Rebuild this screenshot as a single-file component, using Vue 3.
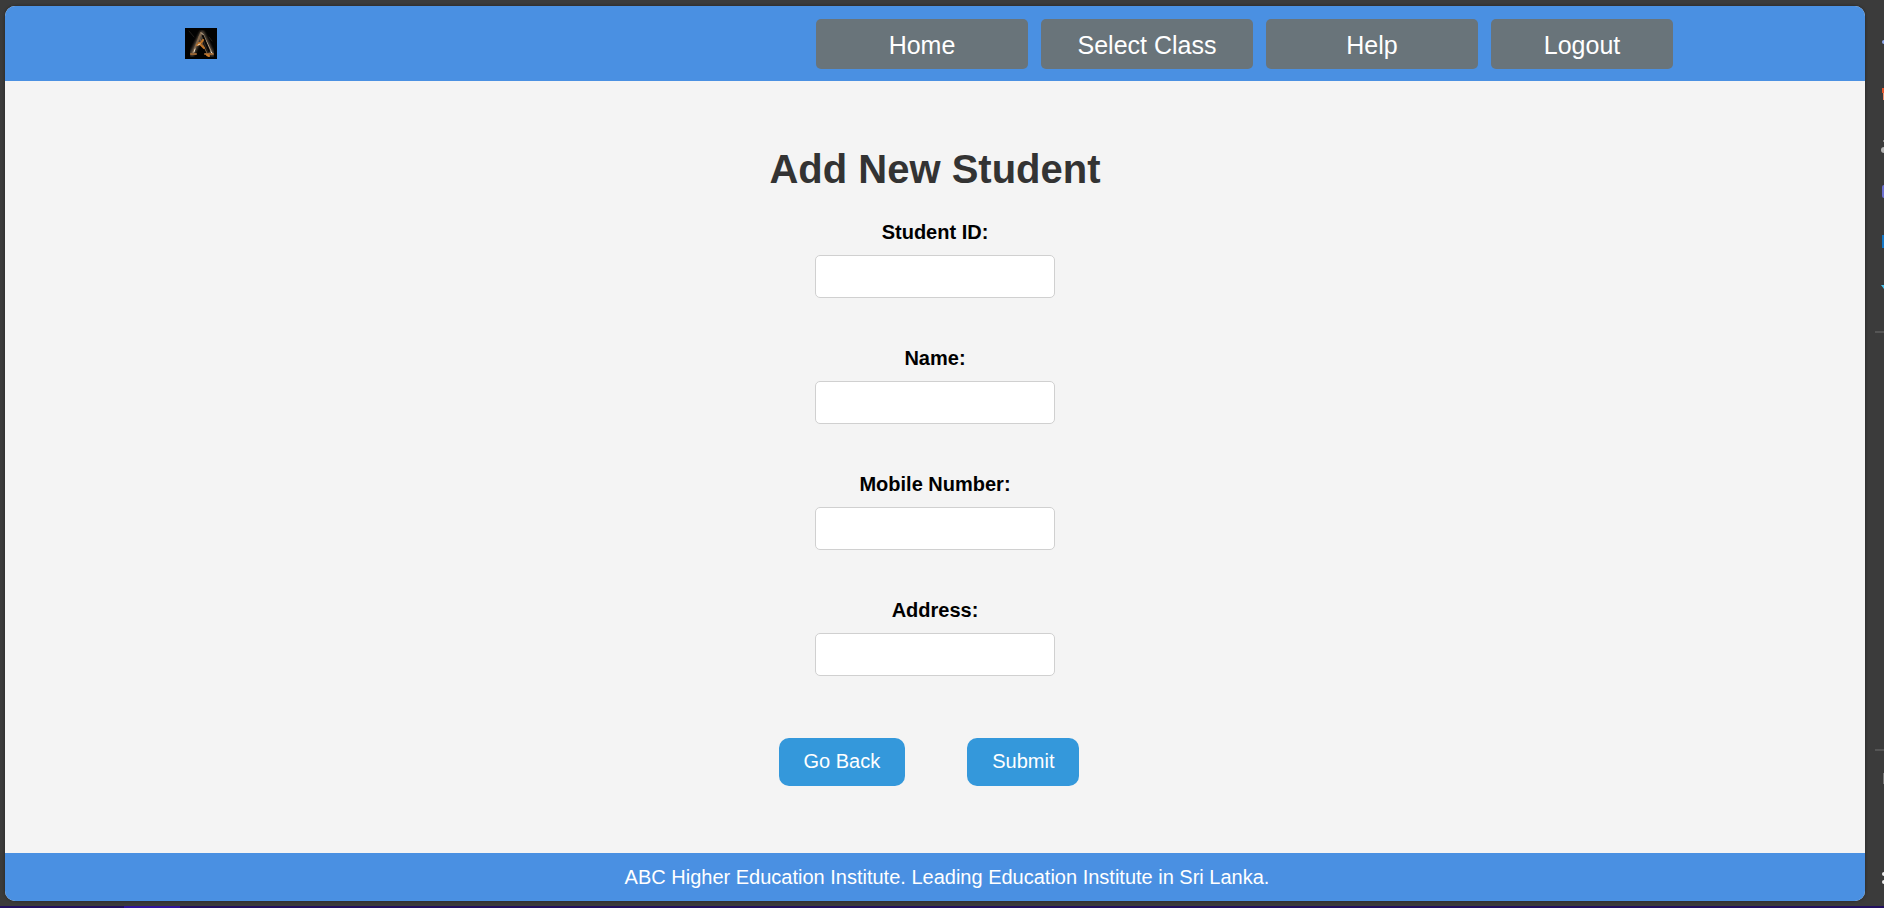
<script setup>
import { reactive } from 'vue'

const links = ['Home', 'Select Class', 'Help', 'Logout']
const fields = [
  { id: 'student-id', label: 'Student ID:' },
  { id: 'name', label: 'Name:' },
  { id: 'mobile', label: 'Mobile Number:' },
  { id: 'address', label: 'Address:' },
]
const student = reactive({ 'student-id': '', name: '', mobile: '', address: '' })
</script>

<template>
  <div class="shell">
    <div class="workspace">
      <div class="frame">
        <header class="header">
          <svg class="logo" viewBox="0 0 32 31" role="img" aria-label="Institute logo">
            <defs>
              <filter id="glow"><feGaussianBlur stdDeviation="1" /></filter>
            </defs>
            <rect width="32" height="31" fill="#020202" />
            <g fill="none" stroke-linejoin="round" stroke-linecap="round">
              <path d="M7 26L17 5L27 26" stroke="#54483c" stroke-width="5" filter="url(#glow)" />
              <path d="M6 26h5M20 26h8" stroke="#9a6330" stroke-width="2" />
              <path d="M8 25L16 5" stroke="#80664c" stroke-width="2" />
              <path d="M16 5l2 1L27 25" stroke="#b09a80" stroke-width="1" />
              <path d="M14 9l8 16" stroke="#80664c" stroke-width="1" />
              <path d="M18 8l6 15" stroke="#070504" stroke-width="2" />
              <path d="M12 17q4 -1 6 -5M14 15l5 5" stroke="#c07428" stroke-width="2" />
              <path d="M9 24l1 -3M13 17l2 -1M26 24l1 1" stroke="#eadcc6" stroke-width="1" />
              <path d="M22 27l2 1" stroke="#c97a2a" stroke-width="2" />
              <path d="M4 3l5 6M24 9l3 4" stroke="#211e1a" stroke-width="1" />
            </g>
          </svg>
          <nav class="nav">
            <a v-for="link in links" :key="link" href="#">{{ link }}</a>
          </nav>
        </header>

        <main class="content">
          <h1>Add New Student</h1>
          <form @submit.prevent>
            <div v-for="field in fields" :key="field.id" class="field">
              <label :for="field.id">{{ field.label }}</label>
              <input :id="field.id" v-model="student[field.id]" type="text" />
            </div>
            <div class="actions">
              <button type="button">Go Back</button>
              <button type="submit">Submit</button>
            </div>
          </form>
        </main>

        <footer class="footer">ABC Higher Education Institute. Leading Education Institute in Sri Lanka.</footer>
      </div>

      <aside class="rail">
        <svg width="19" height="906" viewBox="0 0 19 906" aria-hidden="true">
          <circle cx="19" cy="42" r="2" fill="#8fa9ec" />
          <path d="M17 88h2v5h-2z" fill="#e4572e" />
          <path d="M18 93h1v7h-1z" fill="#f0906e" />
          <circle cx="19" cy="141" r="1" fill="#a0a0a0" />
          <circle cx="19" cy="150" r="3" fill="#b5b5b5" />
          <rect x="17" y="185" width="6" height="13" rx="2" fill="#6b6fd0" />
          <rect x="17" y="235" width="2" height="13" fill="#1478c8" />
          <path d="M16 285h3v4z" fill="#46c2ee" />
          <path d="M10 332h9M10 750h9" stroke="#707070" />
          <rect x="18" y="773" width="1" height="11" fill="#777" />
          <circle cx="19" cy="874" r="2" fill="#eee" />
          <circle cx="19" cy="882" r="2" fill="#eee" />
        </svg>
      </aside>
    </div>
    <div class="strip"><span></span></div>
  </div>
</template>

<style>
html,
body {
  margin: 0;
  background: #3b3b3b;
}
</style>

<style scoped>
.shell {
  display: flex;
  flex-direction: column;
  min-height: 100vh;
  font-family: "Liberation Sans", Arial, sans-serif;
  font-size: 20px;
  line-height: 23px;
  background: #3b3b3b;
}
.workspace {
  display: flex;
  flex: 1;
}
.frame {
  flex: 1;
  display: flex;
  flex-direction: column;
  margin: 6px 0 5px 5px;
  border-radius: 10px;
  overflow: hidden;
  background: #f4f4f4;
  box-shadow: 0 0 3px #222;
}
.header {
  display: flex;
  align-items: center;
  justify-content: space-between;
  box-sizing: border-box;
  min-height: 75px;
  padding: 0 192px 0 180px;
  background: #4a90e2;
}
.logo {
  width: 32px;
  height: 31px;
}
.nav {
  display: grid;
  grid-template-columns: 212px 212px 212px 182px;
  gap: 13px;
}
.nav a {
  height: 50px;
  border-radius: 5px;
  background: #69747a;
  color: #fff;
  font-size: 25px;
  line-height: 52px;
  text-align: center;
  text-decoration: none;
}
.content {
  flex: 1;
  padding-top: 65px;
}
h1 {
  margin: 0 0 29px;
  color: #333;
  font-size: 40px;
  line-height: 46px;
  text-align: center;
}
form {
  display: flex;
  flex-direction: column;
  align-items: center;
  gap: 49px;
}
.field {
  display: flex;
  flex-direction: column;
  align-items: center;
  gap: 11px;
}
label {
  font-weight: bold;
  color: #000;
}
input {
  box-sizing: border-box;
  width: 240px;
  height: 43px;
  padding: 10px;
  border: 1px solid #d0d0d0;
  border-radius: 5px;
  background: #fff;
  font: inherit;
}
.actions {
  display: flex;
  gap: 62px;
  margin: 13px 12px 0 0;
}
button {
  height: 48px;
  padding: 0 25px 2px;
  border: 0;
  border-radius: 10px;
  background: #3498db;
  color: #fff;
  font: inherit;
}
.footer {
  padding: 13px 0 12px 24px;
  background: #4a90e2;
  color: #fff;
  text-align: center;
}
.rail {
  width: 19px;
}
.rail svg {
  display: block;
}
.strip {
  display: flex;
  height: 2px;
  padding-left: 124px;
  background: #22105f;
}
.strip span {
  width: 56px;
  background: #31149c;
}
</style>
